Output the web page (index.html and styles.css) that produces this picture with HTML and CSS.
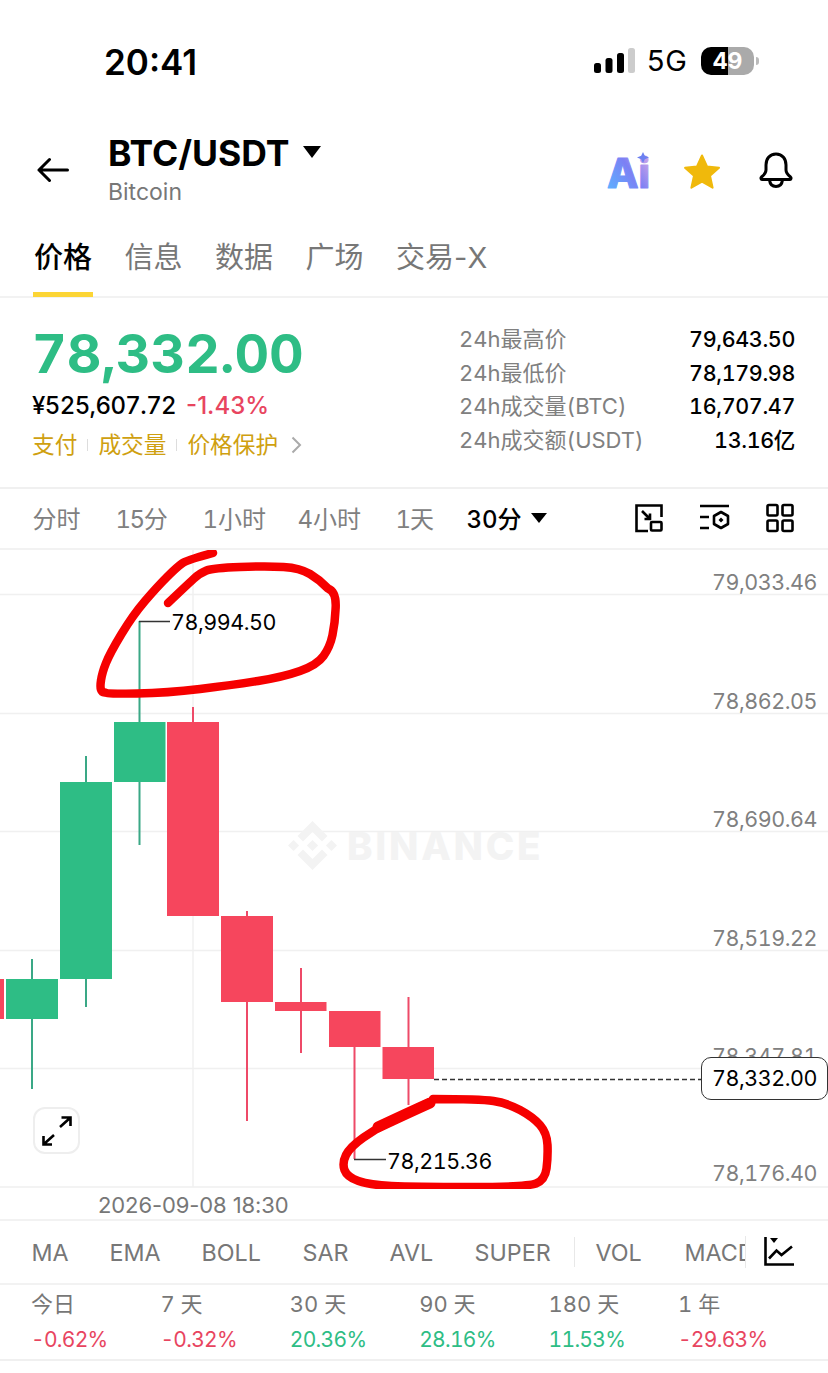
FILE: index.html
```html
<!DOCTYPE html>
<html lang="zh">
<head>
    <meta charset="UTF-8">
    <title>BTC/USDT</title>
    <meta name="viewport" content="width=device-width, initial-scale=1.0">
    <link rel="stylesheet" href="styles.css">
</head>
<body>

<div class="statusbar">
    <span class="time">20:41</span>
    <div class="status-right">
        <svg class="signal" width="42" height="26" viewBox="0 0 42 26">
            <rect x="0" y="15" width="7" height="10" rx="2.5" fill="#000"/>
            <rect x="11.5" y="10" width="7" height="15" rx="2.5" fill="#000"/>
            <rect x="23" y="5" width="7" height="20" rx="2.5" fill="#000"/>
            <rect x="34" y="0" width="7" height="25" rx="2.5" fill="#ccc"/>
        </svg>
        <span class="network">5G</span>
        <div class="battery"><span>49</span></div>
        <div class="battery-tip"></div>
    </div>
</div>

<div class="header">
    <svg class="back" width="32" height="26" viewBox="0 0 32 26" fill="none" stroke="#000" stroke-width="3" stroke-linecap="round" stroke-linejoin="round">
        <path d="M30.5 13H2M12.500 2.500L2 13l10.500 10.500"/>
    </svg>
    <div class="pair">
        <div class="pair-name">BTC/USDT<i class="caret big"></i></div>
        <div class="pair-sub">Bitcoin</div>
    </div>
    <div class="header-icons">
        <svg class="ai" width="54" height="52" viewBox="0 0 54 52">
            <defs>
                <linearGradient id="aiGrad" gradientUnits="userSpaceOnUse" x1="2" y1="40" x2="46" y2="10">
                    <stop offset="0" stop-color="#5cb0ff"/>
                    <stop offset="0.55" stop-color="#7c80f4"/>
                    <stop offset="1" stop-color="#d3a6e6"/>
                </linearGradient>
            </defs>
            <text x="2" y="40" class="ai-text" fill="url(#aiGrad)" stroke="url(#aiGrad)">Ai</text>
            <path d="M38 4l1.800 3.700L44 9.500l-4.200 1.800L38 15l-1.800-3.700L32 9.500l4.200-1.800z" fill="#6c80f0"/>
        </svg>
        <svg class="star" width="38" height="36" viewBox="0 0 38 36">
            <path d="M19 1.500l5 11 12 1.300-9 8 2.600 11.900L19 27.600 8.400 33.700 11 21.800l-9-8 12-1.300z" fill="#f0b90b" stroke="#f0b90b" stroke-width="2" stroke-linejoin="round"/>
        </svg>
        <svg class="bell" width="36" height="36" viewBox="0 0 36 36" fill="none" stroke="#000" stroke-width="3" stroke-linejoin="round" stroke-linecap="round">
            <path d="M18 2c-6.500 0-10 5-10 11v5c0 3-2 5-4.500 7-1 1-.5 2.500 1 2.500h27c1.500 0 2-1.500 1-2.500-2.500-2-4.500-4-4.500-7v-5c0-6-3.500-11-10-11z"/>
            <path d="M11.500 28c.5 4 3 6.500 6.500 6.500s6-2.500 6.500-6.500"/>
        </svg>
    </div>
</div>

<div class="tabs">
    <div class="tab active">价格</div>
    <div class="tab">信息</div>
    <div class="tab">数据</div>
    <div class="tab">广场</div>
    <div class="tab">交易-X</div>
</div>

<div class="summary">
    <div class="summary-left">
        <div class="price">78,332.00</div>
        <div class="price-sub">
            <span class="cny">¥525,607.72</span>
            <span class="change">-1.43%</span>
        </div>
        <div class="links">
            <span>支付</span><i class="link-sep"></i>
            <span>成交量</span><i class="link-sep"></i>
            <span>价格保护</span>
            <svg class="chevron" width="11" height="18" viewBox="0 0 11 18" fill="none" stroke="#aaa" stroke-width="2"><path d="M1.500 1.500L9 9l-7.500 7.500"/></svg>
        </div>
    </div>
    <div class="stats">
        <div class="stat"><span>24h最高价</span><b>79,643.50</b></div>
        <div class="stat"><span>24h最低价</span><b>78,179.98</b></div>
        <div class="stat"><span>24h成交量(BTC)</span><b>16,707.47</b></div>
        <div class="stat"><span>24h成交额(USDT)</span><b>13.16亿</b></div>
    </div>
</div>

<div class="intervals">
    <span class="iv iv1">分时</span>
    <span class="iv iv2">15分</span>
    <span class="iv iv3">1小时</span>
    <span class="iv iv4">4小时</span>
    <span class="iv iv5">1天</span>
    <span class="iv iv-active">30分<i class="caret"></i></span>
    <div class="tools">
        <svg width="30" height="30" viewBox="0 0 30 30" fill="none" stroke="#000" stroke-width="2.600">
            <path d="M14 28H2.500V2.500h25V14"/>
            <path d="M8 8l8 8M16 10.500V16h-5.500"/>
            <rect x="17" y="19" width="10.500" height="8.500" rx="1"/>
        </svg>
        <svg width="30" height="30" viewBox="0 0 30 30" fill="none" stroke="#000" stroke-width="2.600">
            <path d="M0 3h29M0 14h9M0 25h9"/>
            <path d="M21 9l7 4v8l-7 4-7-4v-8z" stroke-linejoin="round"/>
            <path d="M21 14.500l2.500 2.500-2.500 2.500-2.500-2.500z" fill="#000" stroke="none"/>
        </svg>
        <svg width="28" height="30" viewBox="0 0 28 30" fill="none" stroke="#000" stroke-width="2.600">
            <rect x="1.500" y="2" width="10" height="10.500" rx="1.500"/>
            <rect x="16.500" y="2" width="10" height="10.500" rx="1.500"/>
            <rect x="1.500" y="17.500" width="10" height="10.500" rx="1.500"/>
            <rect x="16.500" y="17.500" width="10" height="10.500" rx="1.500"/>
        </svg>
    </div>
</div>

<div class="chart">
    <!-- viewBox uses the same y as the screen so candles are easy to read off -->
    <svg class="plot" width="828" height="639" viewBox="0 550 828 639">
        <g class="grid">
            <path d="M0 594.500H828M0 713.500H828M0 831.500H828M0 950.500H828M0 1068.500H828M0 1187H828"/>
            <path d="M193 550V1187"/>
        </g>

        <g class="watermark">
            <svg x="288" y="821" width="49" height="49" viewBox="0 0 126.610 126.610">
                <path d="M38.730 53.200l24.590-24.580 24.600 24.600 14.300-14.310L63.320 0 24.420 38.900z"/>
                <path d="M0 63.310l14.300-14.310 14.310 14.310-14.310 14.300z"/>
                <path d="M38.730 73.410l24.590 24.590 24.600-24.600 14.310 14.290-38.900 38.910-38.910-38.880-.02-.02z"/>
                <path d="M98 63.310l14.300-14.310 14.310 14.300-14.310 14.320z"/>
                <path d="M77.830 63.300L63.320 48.780 52.590 59.510l-1.240 1.230-2.540 2.540 14.510 14.500 14.510-14.470z"/>
            </svg>
            <text x="347" y="860" class="watermark-text">BINANCE</text>
        </g>

        <g class="up-wick">
            <path d="M32 959V1089M86 756V1007M139.500 621V845"/>
        </g>
        <g class="up">
            <rect x="6" y="979" width="52" height="40"/>
            <rect x="60" y="782" width="52" height="197"/>
            <rect x="114" y="722" width="51.500" height="60"/>
        </g>
        <g class="down-wick">
            <path d="M193 707V722M247 911V1121M301 968V1053M354.500 1047V1159M408.500 997V1105"/>
        </g>
        <g class="down">
            <rect x="0" y="979" width="4" height="40"/>
            <rect x="167" y="722" width="52" height="194"/>
            <rect x="221" y="916" width="52" height="86"/>
            <rect x="275" y="1002" width="51.500" height="9"/>
            <rect x="329" y="1011" width="51.500" height="36"/>
            <rect x="382.500" y="1047" width="51.500" height="32"/>
        </g>

        <g class="leader">
            <path d="M139 621.500H170M354 1159.500H386"/>
        </g>
        <text x="171" y="630" class="mark">78,994.50</text>
        <text x="387" y="1169" class="mark">78,215.36</text>

        <g class="axis">
            <text x="817" y="590">79,033.46</text>
            <text x="817" y="709">78,862.05</text>
            <text x="817" y="827">78,690.64</text>
            <text x="817" y="946">78,519.22</text>
            <text x="817" y="1064">78,347.81</text>
            <text x="817" y="1181">78,176.40</text>
        </g>

        <path class="last-line" d="M434 1079.500H702"/>

        <g class="scribble">
            <path d="M213 553Q187 560 182 563.500Q177 567 167 577Q157 587 145 601Q133 615 121.500 634Q110 653 106 663Q102 673 101 680.500Q99 693 105 692.500Q107 694 137 693.500Q167 693 200 689Q233 685 258 681Q283 677 300 671Q317 665 323.500 656Q330 647 332.500 635Q335 623 335.500 610Q337 592 328 588.500Q320 580 310 574Q300 568 283.500 567Q267 566 240 567Q213 568 206.500 570.500Q200 573 193.500 579Q187 585 168 603"/>
            <path d="M430 1102Q403 1115 390 1121.500Q377 1128 363.500 1137.500Q350 1147 346 1155Q342 1163 344.500 1170Q347 1177 358.500 1181Q370 1185 391.500 1186Q413 1187 470 1187Q527 1187 536 1183.500Q545 1180 546.500 1168.500Q548 1157 547.500 1145Q547 1133 540 1125Q533 1117 520 1110Q507 1103 493.500 1101Q480 1099 433 1099"/>
            <path class="scribble-thick" d="M430 1103Q410 1112 378 1127"/>
        </g>
    </svg>

    <div class="last-price">78,332.00</div>

    <div class="expand">
        <svg width="32" height="32" viewBox="0 0 32 32" fill="none" stroke="#000" stroke-width="2.600">
            <path d="M19 12L29 3M20.500 2.500H29.500V11"/>
            <path d="M13 20L3 29M2.500 21V29.500H11"/>
        </svg>
    </div>
</div>

<div class="date-row">2026-09-08 18:30</div>

<div class="indicators">
    <div class="ind-scroll">
        <span class="ind i1">MA</span>
        <span class="ind i2">EMA</span>
        <span class="ind i3">BOLL</span>
        <span class="ind i4">SAR</span>
        <span class="ind i5">AVL</span>
        <span class="ind i6">SUPER</span>
        <i class="ind-sep"></i>
        <span class="ind i7">VOL</span>
        <span class="ind i8">MACD</span>
    </div>
    <svg class="ind-icon" width="30" height="30" viewBox="0 0 30 30" fill="none" stroke="#000" stroke-width="2.600">
        <path d="M1.500 0V27.500H30"/>
        <path d="M5 21.500L12.500 13.500 17.500 18 28 9.500"/>
        <path d="M6 1H14L10 6z" fill="#000" stroke="none"/>
    </svg>
</div>

<div class="perf">
    <div class="perf-cell"><span>今日</span><b class="down-text">-0.62%</b></div>
    <div class="perf-cell"><span>7 天</span><b class="down-text">-0.32%</b></div>
    <div class="perf-cell"><span>30 天</span><b class="up-text">20.36%</b></div>
    <div class="perf-cell"><span>90 天</span><b class="up-text">28.16%</b></div>
    <div class="perf-cell"><span>180 天</span><b class="up-text">11.53%</b></div>
    <div class="perf-cell"><span>1 年</span><b class="down-text">-29.63%</b></div>
</div>

</body>
</html>
```

FILE: styles.css
```css
* {
    box-sizing: border-box;
}
body {
    font-family: Inter, "Noto Sans CJK SC", sans-serif;
    font-variant-numeric: tabular-nums;
    margin: 0;
    background: #fff;
    color: #000;
    width: 828px;
    height: 1373px;
    overflow: hidden;
}

/* status bar */
.statusbar {
    height: 125px;
    display: flex;
    justify-content: space-between;
    padding: 41px 0 0 104px;
    align-items: flex-start;
}
.time {
    font-size: 35px;
    font-weight: 600;
    line-height: 42px;
    font-variant-numeric: normal;
}
.status-right {
    display: flex;
    align-items: center;
    padding: 0 69px 0 0;
    margin-top: 6px;
}
.signal {
    margin-right: 11px;
}
.network {
    font-size: 29px;
    margin-right: 14px;
    line-height: 28px;
}
.battery {
    width: 53px;
    height: 28px;
    border-radius: 10px;
    background: linear-gradient(90deg, #000 50%, #aaa 50%);
    color: #fff;
    font-size: 23px;
    font-weight: 700;
    line-height: 28px;
    text-align: center;
}
.battery-tip {
    width: 3px;
    height: 8px;
    margin-left: 2px;
    background: #bbb;
    border-radius: 0 3px 3px 0;
}

/* header */
.header {
    height: 98px;
    display: flex;
    align-items: flex-start;
    padding-left: 37px;
}
.back {
    margin-top: 32px;
    margin-right: 39px;
}
.pair-name {
    font-size: 35.500px;
    font-weight: 700;
    line-height: 42px;
    margin-top: 8px;
    display: flex;
    align-items: center;
}
.pair-sub {
    font-size: 23px;
    color: #777;
    line-height: 30px;
    margin-top: 2px;
}
.caret {
    display: inline-block;
    width: 0;
    height: 0;
    border-left: 8px solid transparent;
    border-right: 8px solid transparent;
    border-top: 10px solid #000;
    margin-left: 9px;
}
.caret.big {
    border-left-width: 9.500px;
    border-right-width: 9.500px;
    border-top-width: 12px;
    margin-left: 13px;
    margin-top: -5px;
}
.header-icons {
    margin-left: auto;
    display: flex;
    align-items: flex-start;
    padding: 27px 34px 0 0;
}
.ai {
    margin-right: 24px;
    margin-top: -4px;
}
.ai-text {
    font-family: Inter, sans-serif;
    font-size: 41px;
    font-weight: 800;
    stroke-width: 1;
    stroke-linejoin: round;
}
.star {
    margin-right: 37px;
    margin-top: 2px;
}

/* tabs */
.tabs {
    height: 75px;
    display: flex;
    gap: 32.500px;
    padding-left: 33px;
    border-bottom: 2px solid #f2f2f2;
}
.tab {
    font-size: 29px;
    font-variant-numeric: normal;
    color: #777;
    line-height: 40px;
    padding-top: 15px;
    height: 74px;
}
.tab.active {
    color: #000;
    font-weight: 500;
    border-bottom: 5px solid #fcd535;
    padding-left: 1px;
    padding-right: 1px;
    margin-right: -1px;
}

/* price summary */
.summary {
    height: 191px;
    display: flex;
    justify-content: space-between;
    padding: 0 33px 0 32px;
    border-bottom: 2px solid #f0f0f0;
}
.price {
    font-size: 53.700px;
    font-weight: 700;
    color: #2ebd85;
    line-height: 64px;
    margin-top: 24px;
}
.price-sub {
    display: flex;
    gap: 10px;
    font-size: 24px;
    line-height: 32px;
    margin-top: 4px;
    font-weight: 500;
}
.cny {
    letter-spacing: -0.600px;
}
.change {
    color: #e8455f;
    font-variant-numeric: normal;
}
.links {
    display: flex;
    align-items: center;
    font-size: 22.700px;
    color: #cfa010;
    line-height: 32px;
    margin-top: 7px;
}
.link-sep {
    width: 1px;
    height: 12px;
    background: #ddd;
    margin: 0 10px;
}
.chevron {
    margin-left: 13px;
}
.stats {
    width: 336px;
    padding-top: 25px;
}
.stat {
    display: flex;
    justify-content: space-between;
    height: 33.700px;
    line-height: 33px;
}
.stat span {
    font-size: 22px;
    color: #808080;
}
.stat b {
    font-size: 21.500px;
    font-weight: 500;
    letter-spacing: -0.350px;
}

/* interval bar */
.intervals {
    height: 61px;
    position: relative;
    display: flex;
    align-items: center;
    padding: 0 0 2px 32.500px;
    border-bottom: 2px solid #f2f2f2;
    font-size: 24px;
    color: #808080;
}
.iv1 { width: 83px; }
.iv2 { width: 87px; letter-spacing: -1.500px; }
.iv3 { width: 95px; }
.iv4 { width: 98px; }
.iv5 { width: 71px; letter-spacing: -1px; }
.iv-active {
    color: #000;
    font-weight: 500;
    display: flex;
    align-items: center;
}
.tools {
    margin-left: auto;
    padding-right: 34px;
    display: flex;
    gap: 36px;
}

/* chart */
.chart {
    position: relative;
    height: 639px;
}
.plot {
    display: block;
}
.grid path {
    stroke: #f0f0f0;
    stroke-width: 1.500;
    fill: none;
}
.watermark {
    fill: #f3f3f3;
}
.watermark-text {
    font-family: Inter, sans-serif;
    font-size: 38.500px;
    font-weight: 800;
    letter-spacing: 2.700px;
}
.up {
    fill: #2ebd85;
}
.up-wick path {
    stroke: #3aa886;
    stroke-width: 2;
    fill: none;
}
.down {
    fill: #f6465d;
}
.down-wick path {
    stroke: #ee4a68;
    stroke-width: 2;
    fill: none;
}
.leader path {
    stroke: #333;
    stroke-width: 1.500;
    fill: none;
}
.mark {
    font-family: Inter, sans-serif;
    font-size: 21.500px;
    letter-spacing: -0.450px;
    fill: #000;
}
.axis text {
    font-family: Inter, sans-serif;
    font-size: 21.500px;
    letter-spacing: -0.450px;
    fill: #808080;
    text-anchor: end;
}
.last-line {
    stroke: #333;
    stroke-width: 1.500;
    stroke-dasharray: 5 3;
    fill: none;
}
.scribble path {
    stroke: #f60000;
    stroke-width: 8.500;
    fill: none;
    stroke-linecap: round;
    stroke-linejoin: round;
}
.scribble .scribble-thick {
    stroke-width: 11;
}
.last-price {
    position: absolute;
    left: 701px;
    top: 507px;
    width: 127px;
    height: 43px;
    border: 1.500px solid #333;
    border-radius: 10px;
    background: #fff;
    font-size: 21.500px;
    letter-spacing: -0.450px;
    line-height: 40px;
    text-align: center;
}
.expand {
    position: absolute;
    left: 33px;
    top: 557px;
    width: 47px;
    height: 47px;
    border: 2px solid #eee;
    border-radius: 12px;
    display: flex;
    align-items: center;
    justify-content: center;
    background: #fff;
}

/* date */
.date-row {
    height: 32px;
    padding-left: 98px;
    font-size: 22px;
    font-variant-numeric: normal;
    letter-spacing: -0.100px;
    color: #777;
    line-height: 32px;
    border-bottom: 2px solid #f2f2f2;
}

/* indicators */
.indicators {
    height: 64px;
    display: flex;
    align-items: center;
    border-bottom: 2px solid #f2f2f2;
}
.ind-scroll {
    width: 746px;
    height: 32px;
    display: flex;
    align-items: center;
    overflow: hidden;
    border-right: 1px solid #e8e8e8;
    padding-left: 31.500px;
    white-space: nowrap;
    font-size: 23.300px;
    color: #777;
}
.ind {
    flex-shrink: 0;
}
.i1 { width: 78px; }
.i2 { width: 92px; }
.i3 { width: 101px; }
.i4 { width: 87px; }
.i5 { width: 85px; }
.i6 { width: 99px; }
.ind-sep {
    width: 1px;
    height: 30px;
    background: #e8e8e8;
    margin-right: 21px;
    flex-shrink: 0;
}
.i7 { width: 89px; }
.ind-icon {
    margin-left: 18px;
}

/* performance row */
.perf {
    height: 76px;
    display: grid;
    grid-template-columns: repeat(6, 129.400px);
    padding-left: 31px;
    border-bottom: 2px solid #f0f0f0;
}
.perf-cell {
    display: flex;
    flex-direction: column;
    padding-top: 2px;
}
.perf-cell span {
    font-size: 22px;
    color: #777;
    line-height: 35px;
}
.perf-cell b {
    font-size: 21px;
    font-weight: 400;
    letter-spacing: -0.700px;
    line-height: 36px;
}
.up-text {
    color: #2ebd85;
}
.down-text {
    color: #e8455f;
}
```
